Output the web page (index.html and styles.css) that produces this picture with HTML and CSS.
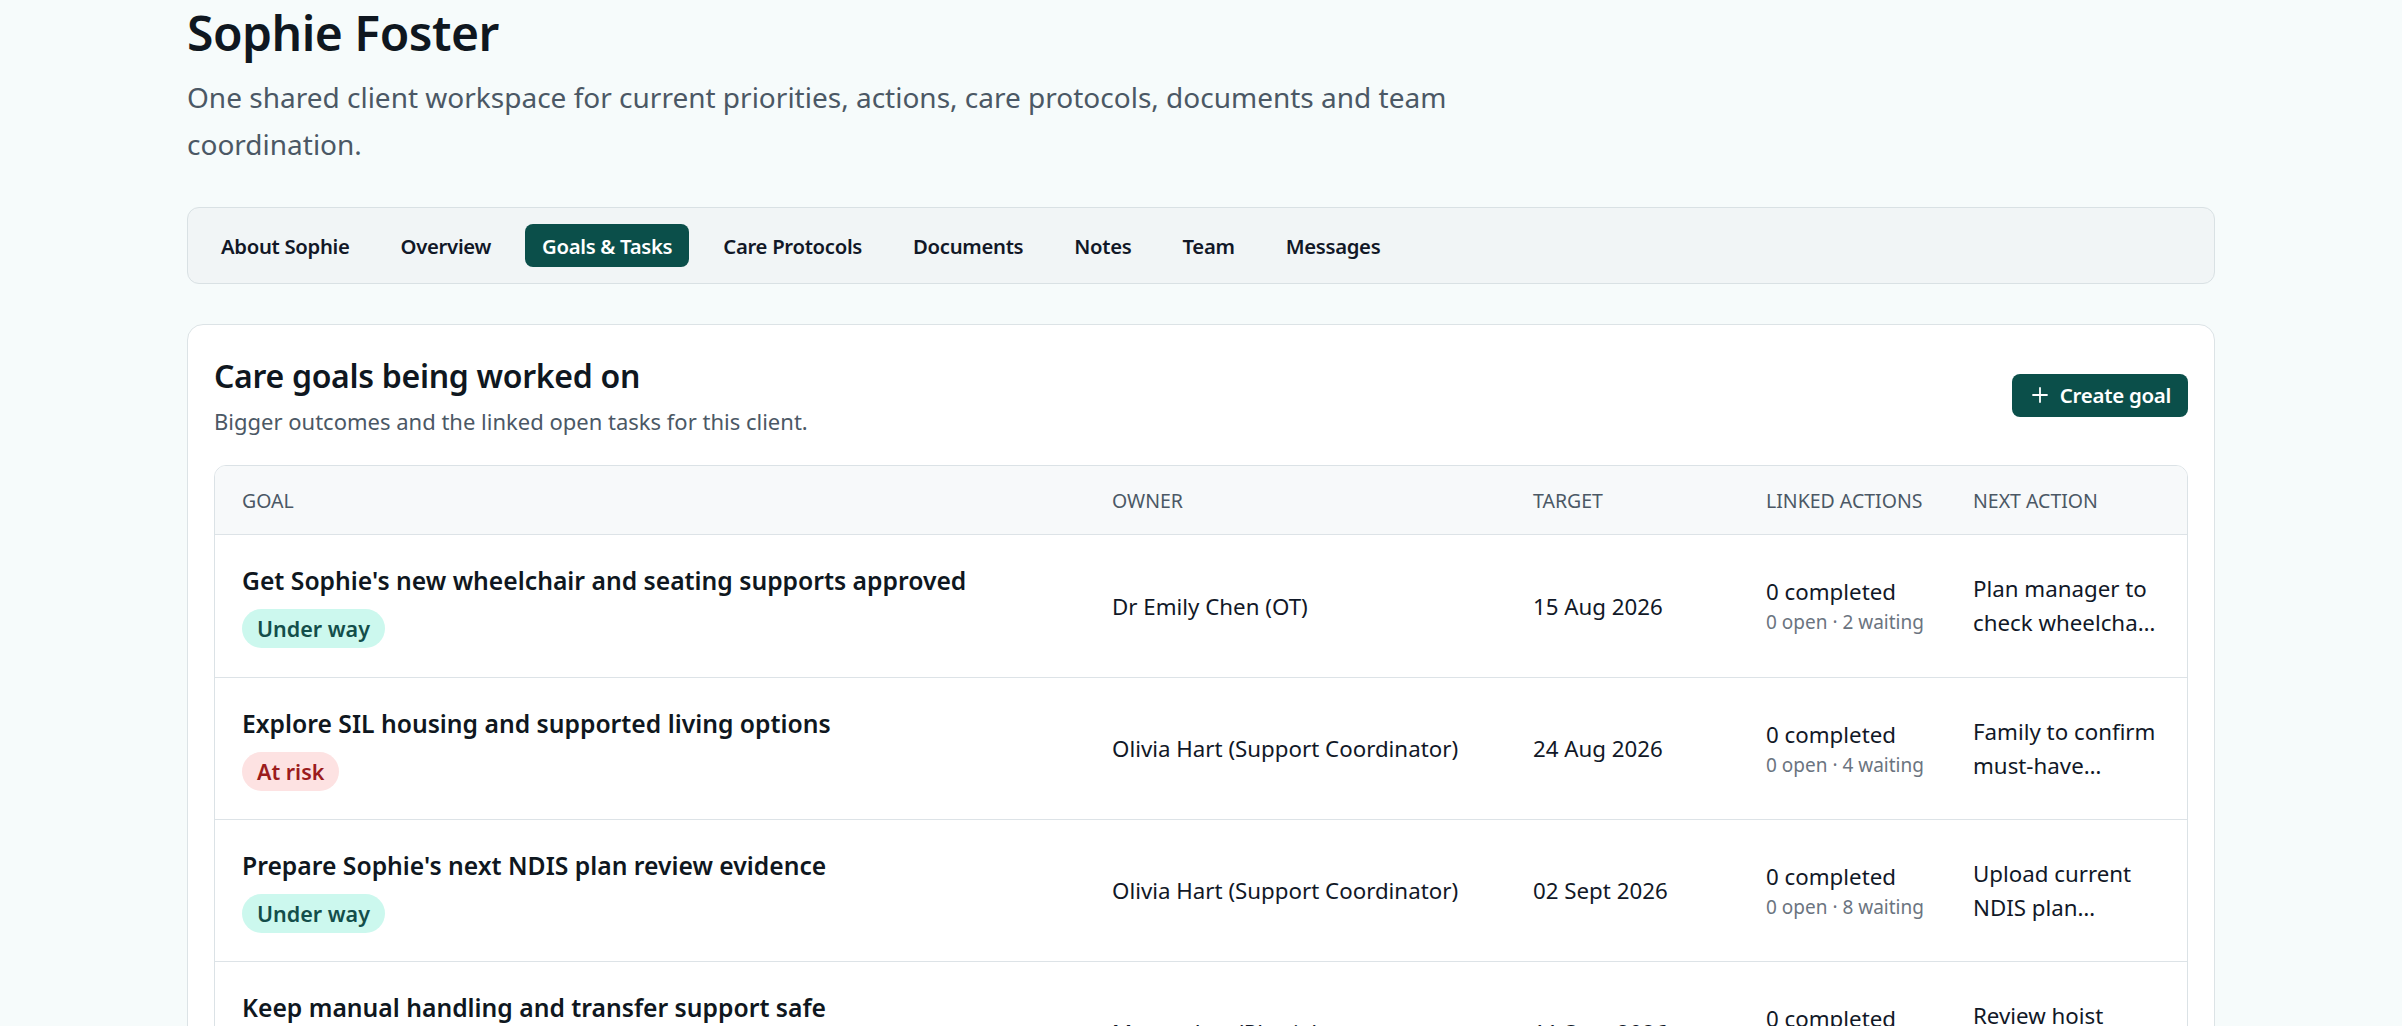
FILE: index.html
```html
<!DOCTYPE html>
<html lang="en">
<head>
<meta charset="utf-8">
<title>Sophie Foster – Goals &amp; Tasks</title>
<link rel="stylesheet" href="styles.css">
</head>
<body>
<main class="page">
  <header class="client-head">
    <h1 class="client-name">Sophie Foster</h1>
    <p class="client-intro">One shared client workspace for current priorities, actions, care protocols, documents and team coordination.</p>
  </header>

  <nav class="tabs">
    <a class="tab">About Sophie</a>
    <a class="tab">Overview</a>
    <a class="tab tab-active">Goals &amp; Tasks</a>
    <a class="tab">Care Protocols</a>
    <a class="tab">Documents</a>
    <a class="tab">Notes</a>
    <a class="tab">Team</a>
    <a class="tab">Messages</a>
  </nav>

  <section class="card">
    <div class="card-head">
      <div>
        <h2 class="card-title">Care goals being worked on</h2>
        <p class="card-sub">Bigger outcomes and the linked open tasks for this client.</p>
      </div>
      <button class="btn-primary" type="button">
        <svg class="btn-icon" viewBox="0 0 20 20" aria-hidden="true"><path d="M10 3v14M3 10h14" fill="none" stroke="currentColor" stroke-width="1.8" stroke-linecap="round"/></svg>
        <span>Create goal</span>
      </button>
    </div>

    <div class="goal-table">
      <div class="row row-head">
        <div class="cell">Goal</div>
        <div class="cell">Owner</div>
        <div class="cell">Target</div>
        <div class="cell linked">Linked actions</div>
        <div class="cell">Next action</div>
      </div>

      <div class="row">
        <div class="cell goal">
          <div class="goal-name">Get Sophie's new wheelchair and seating supports approved</div>
          <span class="badge badge-ok">Under way</span>
        </div>
        <div class="cell">Dr Emily Chen (OT)</div>
        <div class="cell">15 Aug 2026</div>
        <div class="cell linked"><div>0 completed</div><div class="linked-meta">0 open · 2 waiting</div></div>
        <div class="cell next"><span class="clamp">Plan manager to check wheelchair quote and funding</span></div>
      </div>

      <div class="row">
        <div class="cell goal">
          <div class="goal-name">Explore SIL housing and supported living options</div>
          <span class="badge badge-risk">At risk</span>
        </div>
        <div class="cell">Olivia Hart (Support Coordinator)</div>
        <div class="cell">24 Aug 2026</div>
        <div class="cell linked"><div>0 completed</div><div class="linked-meta">0 open · 4 waiting</div></div>
        <div class="cell next"><span class="clamp">Family to confirm must-have features for housing</span></div>
      </div>

      <div class="row">
        <div class="cell goal">
          <div class="goal-name">Prepare Sophie's next NDIS plan review evidence</div>
          <span class="badge badge-ok">Under way</span>
        </div>
        <div class="cell">Olivia Hart (Support Coordinator)</div>
        <div class="cell">02 Sept 2026</div>
        <div class="cell linked"><div>0 completed</div><div class="linked-meta">0 open · 8 waiting</div></div>
        <div class="cell next"><span class="clamp">Upload current NDIS plan documents and reports</span></div>
      </div>

      <div class="row">
        <div class="cell goal">
          <div class="goal-name">Keep manual handling and transfer support safe</div>
          <span class="badge badge-ok">Under way</span>
        </div>
        <div class="cell">Marcus Lee (Physio)</div>
        <div class="cell">11 Sept 2026</div>
        <div class="cell linked"><div>0 completed</div><div class="linked-meta">0 open · 3 waiting</div></div>
        <div class="cell next"><span class="clamp">Review hoist transfer plan with the team</span></div>
      </div>
    </div>
  </section>
</main>
</body>
</html>
```

FILE: styles.css
```css
* { box-sizing: border-box; }

html, body {
  margin: 0;
  background: #f6fbfb;
  color: #111827;
  font-family: "Noto Sans", "Open Sans", sans-serif;
}

.page {
  max-width: 2028px;
  margin: 0 auto;
}

/* client header */
.client-head {
  margin-bottom: 39px;
}

.client-name {
  margin: 0;
  font-size: 48px;
  line-height: 66px;
  font-weight: 600;
  letter-spacing: -0.5px;
  color: #0f1720;
}

.client-intro {
  margin: 8px 0 0;
  max-width: 1300px;
  font-size: 28px;
  line-height: 47px;
  color: #4b5865;
}

/* tab strip */
.tabs {
  display: flex;
  align-items: center;
  gap: 17px;
  padding: 16px;
  background: #f1f5f6;
  border: 1px solid #d9e1e4;
  border-radius: 12px;
}

.tab {
  display: inline-flex;
  align-items: center;
  height: 43px;
  padding: 0 17px;
  border-radius: 8px;
  font-size: 20.3px;
  font-weight: 600;
  color: #111827;
  letter-spacing: -0.3px;
  white-space: nowrap;
}

.tab-active {
  background: #0b4f4a;
  color: #ffffff;
}

/* goals card */
.card {
  margin-top: 40px;
  background: #ffffff;
  border: 1px solid #dce3e6;
  border-radius: 16px;
  padding: 28px 26px 0;
}

.card-head {
  display: flex;
  align-items: center;
  justify-content: space-between;
  margin-bottom: 28px;
}

.card-title {
  margin: 0;
  font-size: 32px;
  line-height: 46px;
  font-weight: 600;
  letter-spacing: -0.3px;
  color: #0f1720;
}

.card-sub {
  margin: 6px 0 0;
  font-size: 22px;
  line-height: 32px;
  color: #4b5865;
}

.btn-primary {
  display: inline-flex;
  align-items: center;
  gap: 10px;
  height: 43px;
  padding: 0 17px 0 18px;
  border: 0;
  border-radius: 8px;
  background: #0b4f4a;
  color: #ffffff;
  font-family: inherit;
  font-size: 20.5px;
  font-weight: 600;
  letter-spacing: -0.3px;
}

.btn-icon {
  width: 20px;
  height: 20px;
}

/* goals table */
.goal-table {
  border: 1px solid #dbe2e6;
  border-radius: 12px;
  overflow: hidden;
}

.row {
  display: grid;
  grid-template-columns: 870px 421px 233px 207px 1fr;
  align-items: center;
  border-top: 1px solid #dde3e7;
  min-height: 142px;
  font-size: 22.3px;
  color: #111827;
}

.row-head {
  border-top: 0;
  min-height: 69px;
  background: #f7f9fa;
  border-bottom: 1px solid #dde3e7;
  font-size: 19.5px;
  text-transform: uppercase;
  color: #4b5865;
}

.row-head + .row {
  border-top: 0;
}

.cell {
  padding: 0 27px;
}

.goal-name {
  font-size: 24.7px;
  line-height: 34px;
  font-weight: 600;
  color: #0f1720;
}

.badge {
  display: inline-flex;
  align-items: center;
  height: 39px;
  margin-top: 11px;
  padding: 0 15px;
  border-radius: 20px;
  font-size: 21.5px;
  font-weight: 600;
}

.badge-ok {
  background: #ccf8ee;
  color: #134e4a;
}

.badge-risk {
  background: #fde2e2;
  color: #9b1c1c;
}

.linked {
  line-height: 32px;
  white-space: nowrap;
}

.row-head .linked {
  line-height: normal;
}

.linked-meta {
  font-size: 19px;
  line-height: 28px;
  color: #6b7480;
}

.next {
  line-height: 34px;
}

.clamp {
  display: -webkit-box;
  -webkit-line-clamp: 2;
  -webkit-box-orient: vertical;
  overflow: hidden;
}
```
